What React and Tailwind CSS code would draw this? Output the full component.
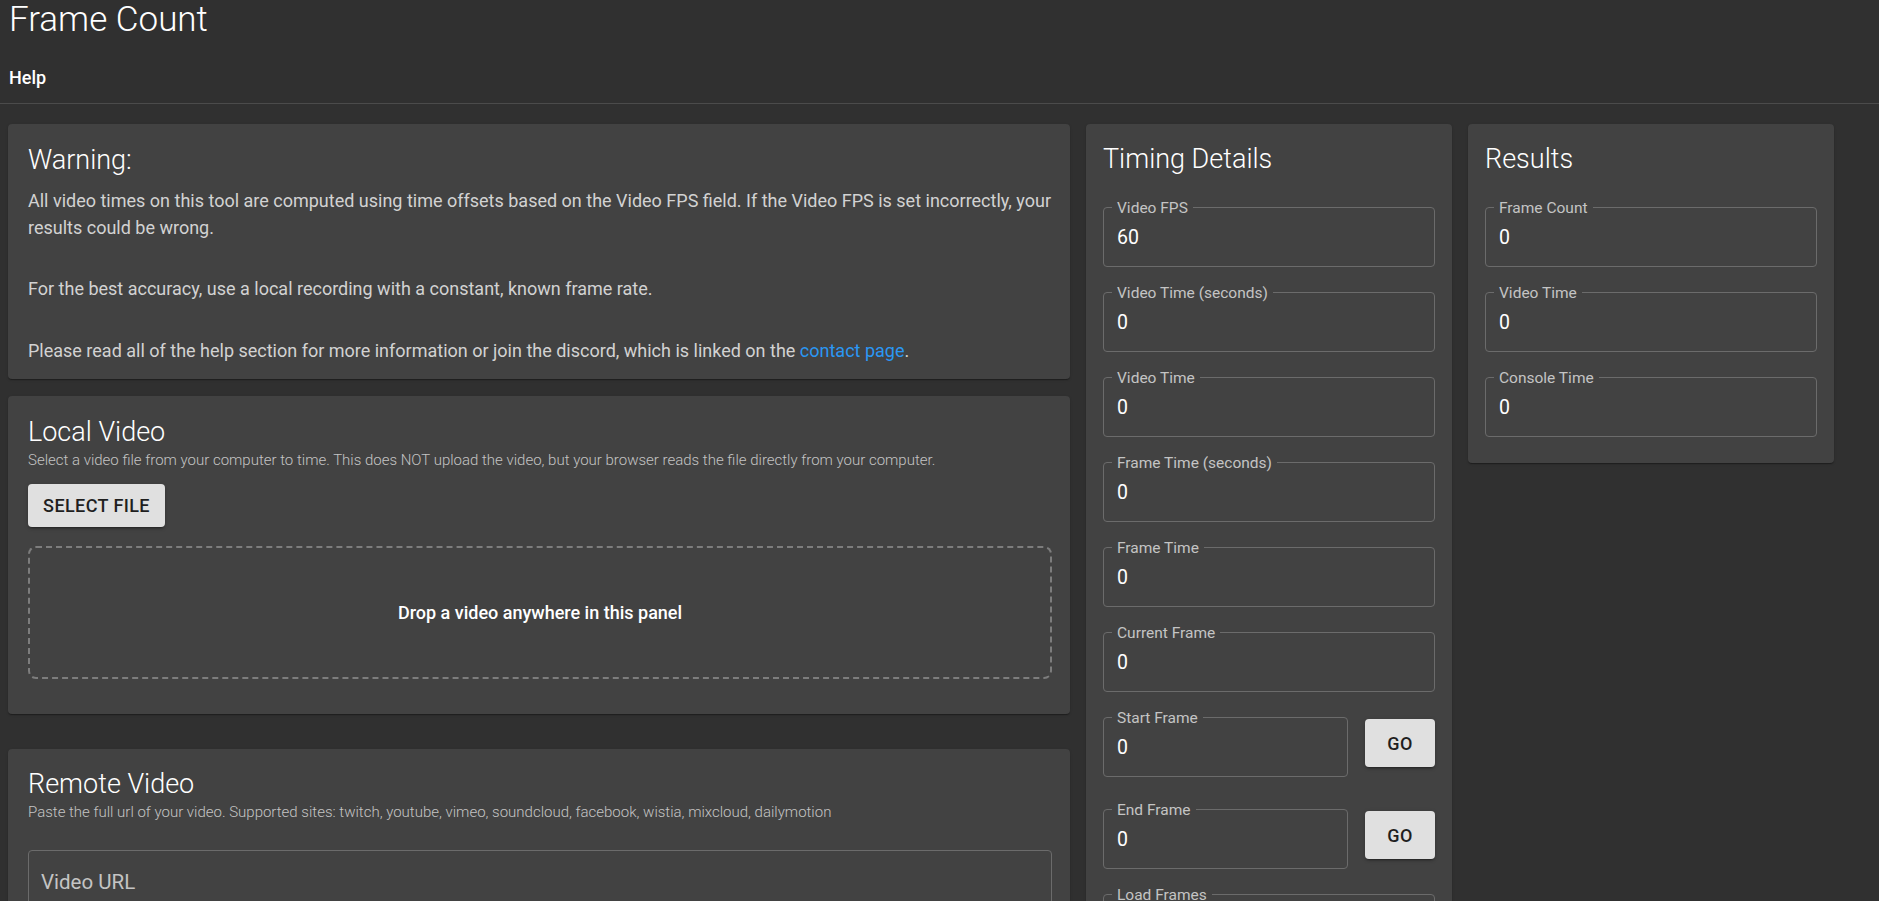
import { useState } from 'react';

function Card({ className = '', children }) {
  return (
    <div
      className={`rounded-[4px] bg-[#424242] shadow-[0_2px_1px_-1px_rgba(0,0,0,0.2),0_1px_1px_0_rgba(0,0,0,0.14),0_1px_3px_0_rgba(0,0,0,0.12)] ${className}`}
    >
      {children}
    </div>
  );
}

function CardTitle({ children }) {
  return <h2 className="text-[27px] font-light leading-[36px] text-white">{children}</h2>;
}

function Field({ label, value, className = '' }) {
  return (
    <div className={`relative h-[60px] rounded-[4px] border border-[#6b6b6b] ${className}`}>
      <span className="absolute left-[8px] top-[-9px] bg-[#424242] px-[5px] text-[15.5px] leading-[18px] text-[#c4c4c4]">
        {label}
      </span>
      <div className="pl-[13px] pt-[18px] text-[19.5px] leading-[24px] text-white">{value}</div>
    </div>
  );
}

function GoButton() {
  return (
    <button className="mt-[2px] flex h-[48px] w-[70px] shrink-0 items-center justify-center rounded-[4px] bg-[#e0e0e0] text-[18px] font-medium tracking-[0.4px] text-[#1f1f1f] shadow-[0_3px_1px_-2px_rgba(0,0,0,0.2),0_2px_2px_0_rgba(0,0,0,0.14),0_1px_5px_0_rgba(0,0,0,0.12)]">
      GO
    </button>
  );
}

export default function App() {
  const [fps] = useState(60);

  const timing = [
    ['Video FPS', fps],
    ['Video Time (seconds)', 0],
    ['Video Time', 0],
    ['Frame Time (seconds)', 0],
    ['Frame Time', 0],
    ['Current Frame', 0],
  ];

  const results = [
    ['Frame Count', 0],
    ['Video Time', 0],
    ['Console Time', 0],
  ];

  return (
    <div className="h-screen overflow-hidden bg-[#303030] font-['Roboto',sans-serif] text-white">
      {/* Header */}
      <header className="border-b border-[#4b4b4b] px-[9px]">
        <h1 className="text-[35px] font-light leading-[40px]">Frame Count</h1>
        <nav className="pb-[12px] pt-[26px]">
          <span className="text-[18px] font-medium leading-[24px]">Help</span>
        </nav>
      </header>

      <main className="flex items-start gap-4 pl-2 pt-[20px]">
        {/* Left column */}
        <div className="flex w-[1062px] shrink-0 flex-col">
          <Card className="pb-[15px] pl-[20px] pr-[18px] pt-[18px]">
            <CardTitle>Warning:</CardTitle>
            <div className="mt-[10px] text-[18px] leading-[26.5px] text-[#d2d2d2]">
              <p>
                All video times on this tool are computed using time offsets based on the Video FPS field. If the
                Video FPS is set incorrectly, your results could be wrong.
              </p>
              <p className="mt-[35px]">
                For the best accuracy, use a local recording with a constant, known frame rate.
              </p>
              <p className="mt-[35px]">
                Please read all of the help section for more information or join the discord, which is linked on the{' '}
                <a className="text-[#2b97f3]">contact page</a>.
              </p>
            </div>
          </Card>

          <Card className="mt-[17px] pb-[35px] pl-[20px] pr-[18px] pt-[18px]">
            <CardTitle>Local Video</CardTitle>
            <p className="text-[15px] font-light leading-[20px] text-[#c4c4c4]">
              Select a video file from your computer to time. This does NOT upload the video, but your browser reads
              the file directly from your computer.
            </p>
            <button className="mt-[14px] flex h-[43px] w-[137px] items-center justify-center rounded-[4px] bg-[#e0e0e0] text-[18px] font-medium tracking-[0.4px] text-[#1f1f1f] shadow-[0_3px_1px_-2px_rgba(0,0,0,0.2),0_2px_2px_0_rgba(0,0,0,0.14),0_1px_5px_0_rgba(0,0,0,0.12)]">
              SELECT FILE
            </button>
            <div className="mt-[19px] flex h-[133px] items-center justify-center rounded-[8px] border-2 border-dashed border-[#7d7d7d]">
              <span className="text-[18px] font-medium text-white">Drop a video anywhere in this panel</span>
            </div>
          </Card>

          <Card className="mt-[35px] pb-[40px] pl-[20px] pr-[18px] pt-[17px]">
            <CardTitle>Remote Video</CardTitle>
            <p className="text-[15px] font-light leading-[20px] text-[#c4c4c4]">
              Paste the full url of your video. Supported sites: twitch, youtube, vimeo, soundcloud, facebook, wistia,
              mixcloud, dailymotion
            </p>
            <div className="mt-[28px] h-[60px] rounded-[4px] border border-[#6b6b6b] pl-[12px] pt-[19px]">
              <span className="text-[20.5px] leading-[24px] text-[#c4c4c4]">Video URL</span>
            </div>
          </Card>
        </div>

        {/* Timing details */}
        <Card className="w-[366px] shrink-0 px-[17px] pb-[26px] pt-[17px]">
          <CardTitle>Timing Details</CardTitle>
          <div className="mt-[30px] flex flex-col gap-[25px]">
            {timing.map(([label, value]) => (
              <Field key={label} label={label} value={value} />
            ))}
            <div className="mb-[7px] flex gap-[17px]">
              <Field label="Start Frame" value={0} className="flex-1" />
              <GoButton />
            </div>
            <div className="flex gap-[17px]">
              <Field label="End Frame" value={0} className="flex-1" />
              <GoButton />
            </div>
            <Field label="Load Frames" value={0} />
          </div>
        </Card>

        {/* Results */}
        <Card className="w-[366px] shrink-0 px-[17px] pb-[26px] pt-[17px]">
          <CardTitle>Results</CardTitle>
          <div className="mt-[30px] flex flex-col gap-[25px]">
            {results.map(([label, value]) => (
              <Field key={label} label={label} value={value} />
            ))}
          </div>
        </Card>
      </main>
    </div>
  );
}
